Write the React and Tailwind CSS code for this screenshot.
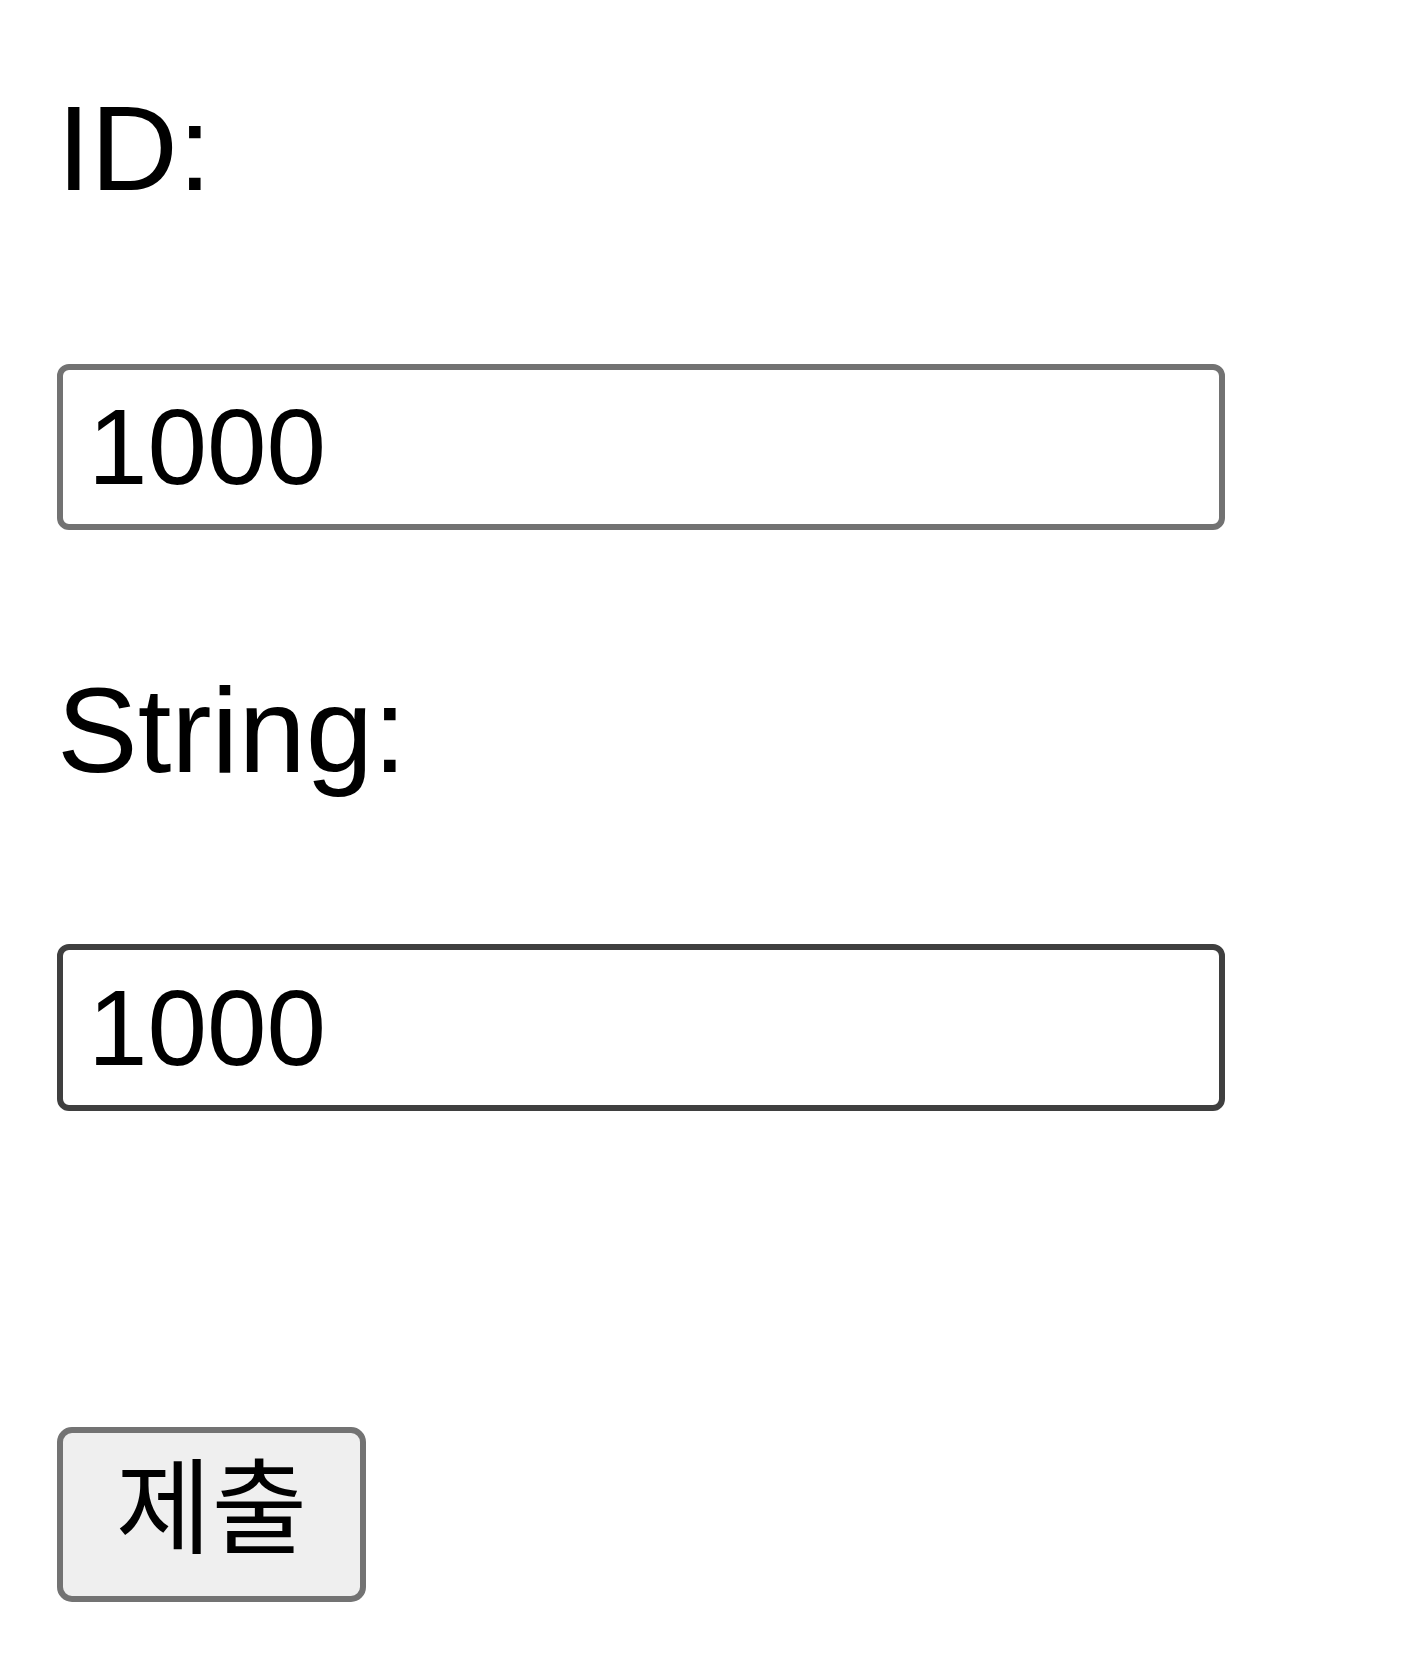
import { useState } from "react";

export default function App() {
  const [id, setId] = useState("1000");
  const [str, setStr] = useState("1000");

  const font = { fontFamily: '"Liberation Sans", "Noto Sans CJK KR", sans-serif' };

  return (
    <div className="min-h-screen bg-white text-black" style={font}>
      <form
        className="flex flex-col items-start pl-[57px] pt-[88px]"
        onSubmit={(e) => e.preventDefault()}
      >
        {/* ID */}
        <label htmlFor="id" className="text-[121px] leading-[121px]">
          ID:
        </label>
        <input
          id="id"
          type="text"
          value={id}
          onChange={(e) => setId(e.target.value)}
          className="mt-[155px] w-[1168px] h-[166px] border-[6px] border-[#727272] rounded-[12px] pl-[25px] text-[107px] bg-white outline-none"
        />

        {/* String */}
        <label htmlFor="str" className="mt-[140px] text-[121px] leading-[121px]">
          String:
        </label>
        <input
          id="str"
          type="text"
          value={str}
          onChange={(e) => setStr(e.target.value)}
          className="mt-[153px] w-[1168px] h-[167px] border-[6px] border-[#3f3f3f] rounded-[12px] pl-[25px] text-[107px] bg-white outline-none"
        />

        <button
          type="submit"
          className="mt-[316px] w-[309px] h-[175px] border-[6px] border-[#737373] rounded-[15px] bg-[#efefef] text-[104px] leading-none flex items-center justify-center pb-[28px]"
          style={{ fontFamily: '"Noto Sans CJK KR", sans-serif' }}
        >
          제출
        </button>
      </form>
    </div>
  );
}
